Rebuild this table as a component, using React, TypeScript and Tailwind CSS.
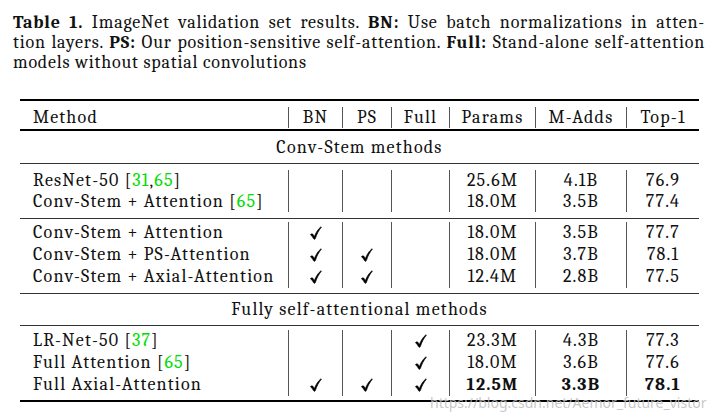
import React from 'react';

type Row = {
  method: React.ReactNode;
  bn?: boolean;
  ps?: boolean;
  full?: boolean;
  params: string;
  madds: string;
  top1: string;
  bold?: boolean;
};

const Cite = ({ n }: { n: string }) => <span className="text-[#00dd00]">{n}</span>;

// CM-style check mark
const Check = () => (
  <svg viewBox="-0.5 -0.5 11 13" className="inline-block w-[12px] h-[14px] align-[-2px]">
    <path
      d="M0 7.4C0.9 6.5 1.9 6.6 2.6 7.8L3.5 9.3C5 5.3 7 2.4 9.4 0.4C9.8 0.1 10.1 0.5 9.8 0.9C7.7 3.3 5.8 6.7 4.4 11.2C4.1 12 3.2 12.1 2.8 11.4C2 9.9 1.1 8.5 0 7.8Z"
      fill="black"
      stroke="black"
      strokeWidth="0.6"
      strokeLinejoin="round"
    />
  </svg>
);

const group1: Row[] = [
  {
    method: (
      <>
        ResNet-50 [<Cite n="31" />,<Cite n="65" />]
      </>
    ),
    params: '25.6M',
    madds: '4.1B',
    top1: '76.9',
  },
  {
    method: (
      <>
        Conv-Stem + Attention [<Cite n="65" />]
      </>
    ),
    params: '18.0M',
    madds: '3.5B',
    top1: '77.4',
  },
];

const group2: Row[] = [
  { method: 'Conv-Stem + Attention', bn: true, params: '18.0M', madds: '3.5B', top1: '77.7' },
  { method: 'Conv-Stem + PS-Attention', bn: true, ps: true, params: '18.0M', madds: '3.7B', top1: '78.1' },
  { method: 'Conv-Stem + Axial-Attention', bn: true, ps: true, params: '12.4M', madds: '2.8B', top1: '77.5' },
];

const group3: Row[] = [
  {
    method: (
      <>
        LR-Net-50 [<Cite n="37" />]
      </>
    ),
    full: true,
    params: '23.3M',
    madds: '4.3B',
    top1: '77.3',
  },
  {
    method: (
      <>
        Full Attention [<Cite n="65" />]
      </>
    ),
    full: true,
    params: '18.0M',
    madds: '3.6B',
    top1: '77.6',
  },
  { method: 'Full Axial-Attention', bn: true, ps: true, full: true, params: '12.5M', madds: '3.3B', top1: '78.1', bold: true },
];

function TableRow({ row, tall }: { row: Row; tall?: boolean }) {
  const h = tall ? 'h-[22px] leading-[22px]' : 'h-[21px] leading-[21px]';
  const num = row.bold ? 'font-bold' : '';
  return (
    <div className={`grid grid-cols-[268px_54px_49px_58px_86px_91px_73px] ${h}`}>
      <div className="pl-[13px] whitespace-nowrap">{row.method}</div>
      <div className="border-l border-[#555] text-center">{row.bn && <Check />}</div>
      <div className="border-l border-[#555] text-center">{row.ps && <Check />}</div>
      <div className="border-l border-[#555] text-center">{row.full && <Check />}</div>
      <div className={`border-l border-[#555] text-center ${num}`}>{row.params}</div>
      <div className={`border-l border-[#555] text-center ${num}`}>{row.madds}</div>
      <div className={`border-l border-[#555] text-center ${num}`}>{row.top1}</div>
    </div>
  );
}

export default function App() {
  return (
    <div className="w-[725px] h-[419px] bg-white relative overflow-hidden text-[#111] font-serif [font-family:Liberation_Serif,serif]">
      {/* caption */}
      <div className="pl-[13px] pt-[13px] w-[705px] text-[18px] leading-[20px] tracking-[0.8px]">
        <div className="text-justify [text-align-last:justify] whitespace-nowrap">
          <b>Table 1.</b> ImageNet validation set results. <b>BN:</b> Use batch normalizations in atten-
        </div>
        <div className="text-justify [text-align-last:justify] whitespace-nowrap">
          tion layers. <b>PS:</b> Our position-sensitive self-attention. <b>Full:</b> Stand-alone self-attention
        </div>
        <div>models without spatial convolutions</div>
      </div>

      {/* table */}
      <div className="ml-[20px] mt-[26px] w-[679px] text-[18px] tracking-[1.2px]">
        <div className="h-[2px] bg-black" />
        <div className="pt-[6px] pb-[1px]">
          <div className="grid grid-cols-[268px_54px_49px_58px_86px_91px_73px] h-[21px] leading-[21px]">
            <div className="pl-[13px]">Method</div>
            <div className="border-l border-[#555] text-center">BN</div>
            <div className="border-l border-[#555] text-center">PS</div>
            <div className="border-l border-[#555] text-center">Full</div>
            <div className="border-l border-[#555] text-center">Params</div>
            <div className="border-l border-[#555] text-center">M-Adds</div>
            <div className="border-l border-[#555] text-center">Top-1</div>
          </div>
        </div>
        <div className="h-[2px] bg-black" />
        <div className="h-[32px] flex items-center justify-center">Conv-Stem methods</div>
        <div className="h-px bg-[#333]" />
        <div className="pt-[6px] pb-[6px]">
          {group1.map((r, i) => (
            <TableRow key={i} row={r} />
          ))}
        </div>
        <div className="h-px bg-[#333]" />
        <div className="pt-[3px] pb-[5px]">
          {group2.map((r, i) => (
            <TableRow key={i} row={r} tall />
          ))}
        </div>
        <div className="h-px bg-[#333]" />
        <div className="h-[31px] flex items-center justify-center">Fully self-attentional methods</div>
        <div className="h-px bg-[#333]" />
        <div className="pt-[4px] pb-[4px]">
          {group3.map((r, i) => (
            <TableRow key={i} row={r} tall />
          ))}
        </div>
        <div className="h-[2px] bg-black" />
      </div>

      {/* watermark */}
      <div className="absolute left-[430px] top-[392px] text-[14px] font-sans [font-family:Liberation_Sans,sans-serif] text-[rgba(190,190,190,0.85)] whitespace-nowrap">
        https://blog.csdn.net/Aemor_future_vistor
      </div>
    </div>
  );
}
